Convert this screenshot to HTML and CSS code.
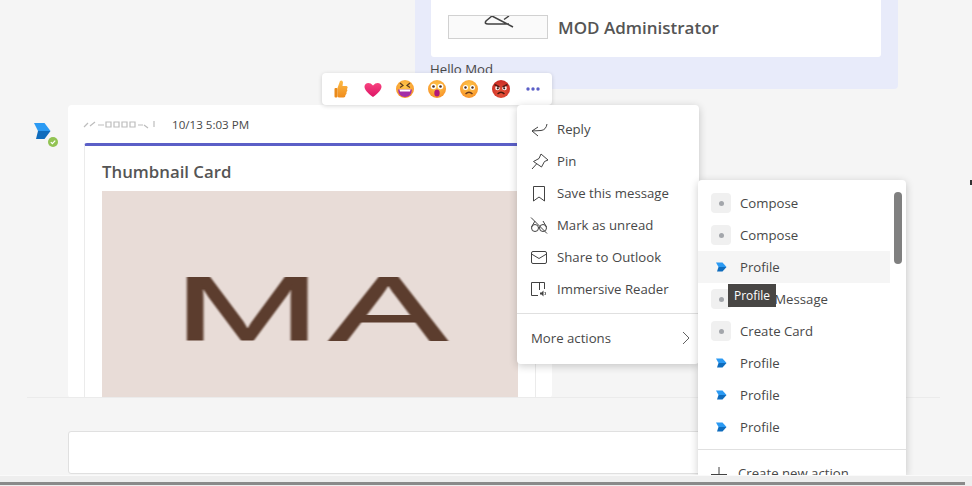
FILE: index.html
```html
<!DOCTYPE html>
<html lang="en">
<head>
    <meta charset="UTF-8">
    <meta name="viewport" content="width=device-width, initial-scale=1.0">
    <title>Chat</title>
    <link rel="stylesheet" href="styles.css">
</head>
<body>
    <div class="page">
        <div class="thread">
            <!-- outgoing message -->
            <div class="outgoing">
                <div class="profile-card">
                    <div class="profile-pic">
                        <svg width="40" height="22" viewBox="0 0 40 22"><path d="M14 0 L8 5 Q6 8 10 8 H31 M14 0 L35 11 M31 0 L26 3.500" fill="none" stroke="#424242" stroke-width="1.500"/></svg>
                    </div>
                    <div class="profile-name">MOD Administrator</div>
                </div>
                <div class="outgoing-text">Hello Mod</div>
            </div>

            <!-- bot message -->
            <div class="message-row">
                <div class="avatar">
                    <svg width="17" height="17" viewBox="0 0 17 17">
                        <path d="M0 0 H10.500 L16.500 8 H4 Z" fill="#2b9af3"/>
                        <path d="M4 8 H16.500 L10.500 16 H2 Z" fill="#0f6cbd"/>
                    </svg>
                    <span class="presence">
                        <svg width="10" height="10" viewBox="0 0 10 10"><circle cx="5" cy="5" r="5" fill="#92c353"/><path d="M2.800 5.100 L4.400 6.600 L7.200 3.600" fill="none" stroke="#fff" stroke-width="1.200"/></svg>
                    </span>
                </div>
                <div class="message">
                    <div class="message-head">
                        <svg class="name-smudge" width="78" height="12" viewBox="0 0 78 12">
                            <path d="M2 9l4-4M8 8l5-4M16 7h6M24 4h5v5h-5zM32 4h5v5h-5zM40 4h5v5h-5zM48 4h5v5h-5zM56 7h5M62 7l4 3M72 3v6" fill="none" stroke="#bdbdbd" stroke-width="1.200"/>
                        </svg>
                        <span class="timestamp">10/13 5:03 PM</span>
                    </div>
                    <div class="card">
                        <div class="card-title">Thumbnail Card</div>
                        <div class="thumb"><span class="thumb-letters">MA</span></div>
                    </div>
                </div>
            </div>
        </div>

        <div class="composer"></div>
        <div class="statusbar"><div class="statusbar-line"></div></div>
    </div>

    <!-- reactions -->
    <div class="reactions">
        <svg width="20" height="20" viewBox="0 0 20 20"><defs>
            <linearGradient id="thumb" x1="0" y1="0" x2="0" y2="1"><stop offset="0" stop-color="#fdbb46"/><stop offset="1" stop-color="#f08c1c"/></linearGradient>
            <linearGradient id="heart" x1="0" y1="0" x2="0" y2="1"><stop offset="0" stop-color="#f8447f"/><stop offset="1" stop-color="#dc1466"/></linearGradient>
            <radialGradient id="face" cx="0.5" cy="0.35" r="0.7"><stop offset="0" stop-color="#ffc94d"/><stop offset="1" stop-color="#f78f26"/></radialGradient>
            <radialGradient id="angry" cx="0.5" cy="0.7" r="0.7"><stop offset="0" stop-color="#e8553a"/><stop offset="1" stop-color="#c92a24"/></radialGradient>
        </defs><path d="M6.500 9 L9 2 Q11.500 0.500 12 3.500 L11.500 7 H15.500 Q17.500 8 16 10 Q17 12 15.500 13 Q16 15 14.500 16 Q14.500 18.500 12.500 18.500 H8.500 Q6.500 18.500 6.500 17 Z" fill="url(#thumb)"/><rect x="3.500" y="9" width="3" height="9.500" rx="1" fill="#ea8a1a"/></svg>
        <svg width="20" height="20" viewBox="0 0 20 20"><path d="M10 18 C4 13.500 1.500 10.500 1.500 7.500 C1.500 4 6.500 2 10 6.500 C13.500 2 18.500 4 18.500 7.500 C18.500 10.500 16 13.500 10 18Z" fill="url(#heart)"/></svg>
        <svg width="20" height="20" viewBox="0 0 20 20"><circle cx="10" cy="10" r="9" fill="url(#face)"/><path d="M3 10.500 H17 Q16.500 18 10 18 Q3.500 18 3 10.500Z" fill="#a32ea8"/><path d="M4.500 10.500 H15.500 L15 12.500 H5Z" fill="#fff"/><path d="M5 4 L8 6.500 L5 8.500 M15 4 L12 6.500 L15 8.500" fill="none" stroke="#5b3a1e" stroke-width="1.200"/></svg>
        <svg width="20" height="20" viewBox="0 0 20 20"><circle cx="10" cy="10" r="9" fill="url(#face)"/><circle cx="6.500" cy="7.500" r="2.800" fill="#fff"/><circle cx="13.500" cy="7.500" r="2.800" fill="#fff"/><circle cx="6.500" cy="7.500" r="1.300" fill="#4a2d20"/><circle cx="13.500" cy="7.500" r="1.300" fill="#4a2d20"/><ellipse cx="10" cy="14" rx="2.700" ry="3.500" fill="#b0187a"/></svg>
        <svg width="20" height="20" viewBox="0 0 20 20"><circle cx="10" cy="10" r="9" fill="url(#face)"/><circle cx="6.500" cy="8.500" r="2.500" fill="#fff"/><circle cx="13.500" cy="8.500" r="2.500" fill="#fff"/><circle cx="6.500" cy="8.500" r="1.200" fill="#4a2d20"/><circle cx="13.500" cy="8.500" r="1.200" fill="#4a2d20"/><path d="M6.500 15 Q10 11.500 13.500 15" fill="none" stroke="#6a3a1e" stroke-width="1.400"/></svg>
        <svg width="20" height="20" viewBox="0 0 20 20"><circle cx="10" cy="10" r="9" fill="url(#angry)"/><circle cx="6.500" cy="9" r="2.300" fill="#fff"/><circle cx="13.500" cy="9" r="2.300" fill="#fff"/><circle cx="6.800" cy="9.300" r="1.100" fill="#3a1a14"/><circle cx="13.200" cy="9.300" r="1.100" fill="#3a1a14"/><path d="M3.500 5.500 L8.500 8 M16.500 5.500 L11.500 8" stroke="#5a1810" stroke-width="1.400"/><path d="M6.500 15 Q10 11.500 13.500 15" fill="none" stroke="#4a1810" stroke-width="1.400"/></svg>
        <svg width="20" height="20" viewBox="0 0 20 20"><circle cx="5" cy="10" r="1.700" fill="#5b5fc7"/><circle cx="10" cy="10" r="1.700" fill="#5b5fc7"/><circle cx="15" cy="10" r="1.700" fill="#5b5fc7"/></svg>
    </div>

    <!-- message context menu -->
    <div class="menu">
        <div class="menu-item">
            <svg width="18" height="18" viewBox="0 0 18 18"><path d="M17 4 Q16 10 11 10.500 L2 11 M8 7 L2 11 L8 16" fill="none" stroke="#424242"/></svg>
            Reply
        </div>
        <div class="menu-item">
            <svg width="18" height="18" viewBox="0 0 18 18"><path d="M11 2 L18 8 L14.500 9.500 L11.500 15 L3.500 9.500 L9 6.500 Z M6.500 12 L2 17" fill="none" stroke="#424242"/></svg>
            Pin
        </div>
        <div class="menu-item">
            <svg width="18" height="18" viewBox="0 0 18 18"><path d="M3.500 2.500 H14.500 V17 L9 13 L3.500 17Z" fill="none" stroke="#424242"/></svg>
            Save this message
        </div>
        <div class="menu-item">
            <svg width="18" height="18" viewBox="0 0 18 18"><circle cx="5" cy="12" r="3.500" fill="none" stroke="#424242"/><circle cx="13" cy="12" r="3.500" fill="none" stroke="#424242"/><path d="M1.500 11 L5 5 M16.500 11 L13 5 M8.500 11.500 H9.500 M1 1.500 L17 17.500" fill="none" stroke="#424242"/></svg>
            Mark as unread
        </div>
        <div class="menu-item">
            <svg width="18" height="18" viewBox="0 0 18 18"><rect x="1.500" y="3.500" width="15" height="12" rx="1.500" fill="none" stroke="#424242"/><path d="M1.500 6 L9 10.500 L16.500 6" fill="none" stroke="#424242"/></svg>
            Share to Outlook
        </div>
        <div class="menu-item">
            <svg width="18" height="18" viewBox="0 0 18 18"><path d="M8 15.500 H1.500 V2.500 H14.500 V9 M9.500 2.500 V10" fill="none" stroke="#424242"/><path d="M10 12.500 H11.500 L13.500 10.500 V16.500 L11.500 14.500 H10Z" fill="#424242"/><path d="M15 12 Q16 13.500 15 15" fill="none" stroke="#424242"/></svg>
            Immersive Reader
        </div>
        <div class="menu-divider"></div>
        <div class="menu-more">
            More actions
            <svg width="8" height="14" viewBox="0 0 8 14"><path d="M1 1 L7 7 L1 13" fill="none" stroke="#616161"/></svg>
        </div>
    </div>

    <!-- more actions submenu -->
    <div class="submenu">
        <div class="submenu-list">
            <div class="action"><span class="app-tile"><i class="app-dot"></i></span>Compose</div>
            <div class="action"><span class="app-tile"><i class="app-dot"></i></span>Compose</div>
            <div class="action action-hover"><span class="app-logo"><svg width="11" height="10" viewBox="0 0 11 10"><path d="M0 0.500 H6.500 L10.500 5 H2.500Z" fill="#2b9af3"/><path d="M2.500 5 H10.500 L6.500 9.500 H1Z" fill="#0f6cbd"/></svg></span>Profile</div>
            <div class="action"><span class="app-tile"><i class="app-dot"></i></span><span class="action-hidden">Send </span>Message</div>
            <div class="action"><span class="app-tile"><i class="app-dot"></i></span>Create Card</div>
            <div class="action"><span class="app-logo"><svg width="11" height="10" viewBox="0 0 11 10"><path d="M0 0.500 H6.500 L10.500 5 H2.500Z" fill="#2b9af3"/><path d="M2.500 5 H10.500 L6.500 9.500 H1Z" fill="#0f6cbd"/></svg></span>Profile</div>
            <div class="action"><span class="app-logo"><svg width="11" height="10" viewBox="0 0 11 10"><path d="M0 0.500 H6.500 L10.500 5 H2.500Z" fill="#2b9af3"/><path d="M2.500 5 H10.500 L6.500 9.500 H1Z" fill="#0f6cbd"/></svg></span>Profile</div>
            <div class="action"><span class="app-logo"><svg width="11" height="10" viewBox="0 0 11 10"><path d="M0 0.500 H6.500 L10.500 5 H2.500Z" fill="#2b9af3"/><path d="M2.500 5 H10.500 L6.500 9.500 H1Z" fill="#0f6cbd"/></svg></span>Profile</div>
        </div>
        <div class="scroll-thumb"></div>
        <div class="create-action">
            <svg width="16" height="16" viewBox="0 0 16 16"><path d="M8 0 V16 M0 7.500 H16" stroke="#424242"/></svg>
            <span class="create-label">Create new action</span>
        </div>
    </div>

    <div class="tooltip">Profile</div>
    <div class="edge-mark"></div>
</body>
</html>
```

FILE: styles.css
```css
* {
    box-sizing: border-box;
}
html, body {
    margin: 0;
    height: 100%;
    overflow: hidden;
}
body {
    font-family: "Open Sans", "Noto Sans", sans-serif;
    font-size: 13.2px;
    color: #484848;
    background: #f5f5f5;
}
.page {
    height: 486px;
    display: flex;
    flex-direction: column;
}
.thread {
    height: 398px;
    margin: 0 32px 0 27px;
    padding-left: 41px;
    border-bottom: 1px solid #ebebeb;
    overflow: hidden;
    flex-shrink: 0;
}
.outgoing {
    width: 483px;
    height: 89px;
    margin-left: 347px;
    padding: 0 17px 0 16px;
    background: #e8ebfa;
    border-radius: 0 0 4px 4px;
}
.profile-card {
    height: 57px;
    padding: 15px 17px;
    display: flex;
    align-items: flex-start;
    gap: 10px;
    background: #fff;
    border-radius: 0 0 3px 3px;
}
.profile-pic {
    width: 100px;
    height: 24px;
    display: flex;
    justify-content: center;
    background: #fafafa;
    border: 1px solid #d1d1d1;
    overflow: hidden;
}
.profile-name {
    font-size: 17px;
    font-weight: 600;
    line-height: 26px;
    color: #555;
    white-space: nowrap;
}
.outgoing-text {
    margin-top: 3px;
    margin-left: -1px;
    line-height: 18px;
}
.message-row {
    position: relative;
    margin-top: 16px;
}
.avatar {
    position: absolute;
    left: -34px;
    top: 18px;
    width: 17px;
    height: 17px;
}
.presence {
    position: absolute;
    left: 14px;
    top: 14px;
    width: 10px;
    height: 10px;
    display: flex;
}
.message {
    width: 484px;
    height: 293px;
    padding: 0 16px;
    background: #fff;
    border-radius: 4px;
}
.message-head {
    height: 38px;
    display: flex;
    align-items: center;
    gap: 12px;
    margin-left: -2px;
}
.name-smudge {
    filter: blur(0.5px);
}
.timestamp {
    font-size: 11.6px;
}
.card {
    width: 452px;
    height: 260px;
    padding: 0 17px;
    border: 1px solid #ebebeb;
    border-top: 3px solid #5b5fc7;
    border-radius: 3px 3px 0 0;
}
.card-title {
    height: 45px;
    padding-top: 14px;
    font-size: 16.8px;
    font-weight: 600;
    line-height: 24px;
    color: #555;
}
.thumb {
    width: 416px;
    height: 206px;
    display: flex;
    justify-content: center;
    align-items: center;
    background: #e8dcd7;
    overflow: hidden;
}
.thumb-letters {
    font-family: "Liberation Sans", sans-serif;
    font-size: 91px;
    line-height: 1;
    color: #5c3d2e;
    letter-spacing: 4px;
    -webkit-text-stroke: 1px #5c3d2e;
    transform: translate(4px, 14px) scaleX(1.95);
    filter: blur(0.5px);
}
.composer {
    width: 700px;
    height: 43px;
    margin: 33px 0 0 68px;
    background: #fff;
    border: 1px solid #e0e0e0;
    border-radius: 3px;
    flex-shrink: 0;
}
.statusbar {
    position: relative;
    z-index: 1;
    height: 11px;
    margin-top: 1px;
    padding: 6px 7px 0 0;
    background: #eeeeee;
    border-top: 1px solid #fafafa;
    flex-shrink: 0;
}
.statusbar-line {
    height: 3px;
    background: #8a8a8a;
}
.reactions {
    position: absolute;
    left: 322px;
    top: 73px;
    width: 230px;
    height: 32px;
    padding-left: 9px;
    display: flex;
    align-items: center;
    gap: 12px;
    background: #fff;
    border-radius: 4px;
    box-shadow: 0 1px 4px rgba(0, 0, 0, 0.16);
}
.menu {
    position: absolute;
    left: 517px;
    top: 105px;
    width: 182px;
    height: 259px;
    padding-top: 8px;
    background: #fff;
    border-radius: 4px;
    box-shadow: 0 2px 8px rgba(0, 0, 0, 0.2);
}
.menu-item {
    height: 32px;
    padding-left: 13px;
    display: flex;
    align-items: center;
    gap: 9px;
    white-space: nowrap;
}
.menu-divider {
    height: 1px;
    margin-top: 8px;
    background: #e0e0e0;
}
.menu-more {
    height: 48px;
    padding: 0 9px 0 14px;
    display: flex;
    align-items: center;
    justify-content: space-between;
}
.submenu {
    position: absolute;
    left: 698px;
    top: 180px;
    width: 208px;
    height: 295px;
    padding-top: 7px;
    background: #fff;
    border-radius: 4px 4px 0 0;
    box-shadow: 0 2px 8px rgba(0, 0, 0, 0.2);
    overflow: hidden;
}
.submenu-list {
    width: 192px;
    height: 262px;
}
.action {
    height: 32px;
    padding-left: 13px;
    display: flex;
    align-items: center;
    white-space: nowrap;
}
.action-hover {
    background: #f5f5f5;
}
.action-hidden {
    visibility: hidden;
    white-space: pre;
}
.app-tile, .app-logo {
    width: 20px;
    height: 20px;
    margin-right: 9px;
    display: flex;
    align-items: center;
    justify-content: center;
    flex-shrink: 0;
}
.app-tile {
    background: #f0f0f0;
    border-radius: 4px;
}
.app-dot {
    width: 5px;
    height: 5px;
    background: #a3a6ab;
    border-radius: 50%;
}
.scroll-thumb {
    position: absolute;
    left: 196px;
    top: 12px;
    width: 8px;
    height: 72px;
    background: #808080;
    border-radius: 4px;
}
.create-action {
    height: 40px;
    padding: 17px 0 0 13px;
    display: flex;
    align-items: flex-start;
    gap: 11px;
    border-top: 1px solid #e0e0e0;
    white-space: nowrap;
}
.create-label {
    margin-top: -3px;
}
.tooltip {
    position: absolute;
    left: 728px;
    top: 284px;
    width: 48px;
    height: 23px;
    display: flex;
    align-items: center;
    justify-content: center;
    font-size: 12px;
    color: #fff;
    background: #484644;
}
.edge-mark {
    position: absolute;
    left: 970px;
    top: 180px;
    width: 2px;
    height: 5px;
    background: #333;
}
```
